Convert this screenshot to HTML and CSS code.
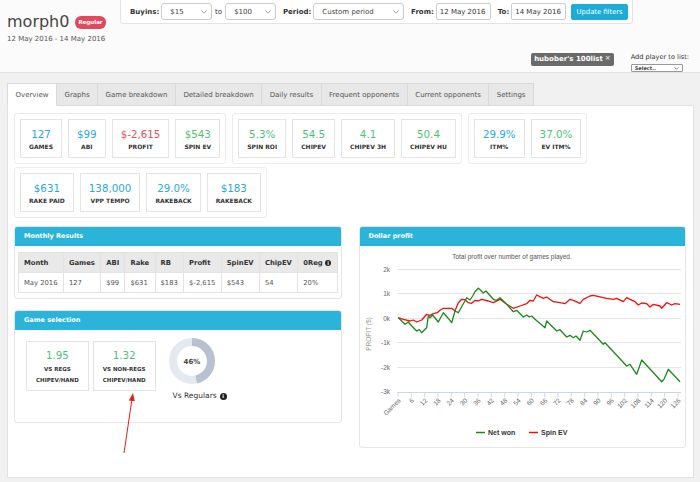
FILE: index.html
```html
<!DOCTYPE html>
<html lang="en">
<head>
  <meta charset="UTF-8">
  <meta name="viewport" content="width=device-width, initial-scale=1.0">
  <title>morph0 - Overview</title>
  <link rel="stylesheet" href="styles.css">
</head>
<body>
  <header class="top">
    <div class="player">
      <h1>morph0 <span class="badge">Regular</span></h1>
      <p class="range">12 May 2016 - 14 May 2016</p>
    </div>
    <div class="right">
      <div class="filters">
        <label class="first">Buyins:</label>
        <div class="select select-sm"><span>$15</span><svg width="6" height="4" viewBox="0 0 6 4"><polyline points="0.5,0.5 3,3 5.5,0.5" fill="none" stroke="#888" stroke-width="0.8"/></svg></div>
        <span class="to">to</span>
        <div class="select select-sm"><span>$100</span><svg width="6" height="4" viewBox="0 0 6 4"><polyline points="0.5,0.5 3,3 5.5,0.5" fill="none" stroke="#888" stroke-width="0.8"/></svg></div>
        <label>Period:</label>
        <div class="select select-lg"><span>Custom period</span><svg width="6" height="4" viewBox="0 0 6 4"><polyline points="0.5,0.5 3,3 5.5,0.5" fill="none" stroke="#888" stroke-width="0.8"/></svg></div>
        <label>From:</label>
        <input class="date" type="text" value="12 May 2016">
        <label>To:</label>
        <input class="date" type="text" value="14 May 2016">
        <button class="btn">Update filters</button>
      </div>
      <div class="lists">
        <span class="tag">hubober's 100list<span class="x">×</span></span>
        <div class="add-player">
          <label>Add player to list:</label>
          <div class="select select-xs"><span>Select..</span><svg width="5" height="3" viewBox="0 0 6 4"><polyline points="0.5,0.5 3,3 5.5,0.5" fill="none" stroke="#555" stroke-width="1"/></svg></div>
        </div>
      </div>
    </div>
  </header>

  <main class="main">
    <ul class="tabs">
      <li class="active">Overview</li>
      <li>Graphs</li>
      <li>Game breakdown</li>
      <li>Detailed breakdown</li>
      <li>Daily results</li>
      <li>Frequent opponents</li>
      <li>Current opponents</li>
      <li>Settings</li>
    </ul>

    <section class="tab-panel">
      <div class="stats">
        <div class="stat-group">
          <div class="stat"><div class="stat-value blue">127</div><div class="stat-label">GAMES</div></div>
          <div class="stat"><div class="stat-value blue">$99</div><div class="stat-label">ABI</div></div>
          <div class="stat"><div class="stat-value red">$-2,615</div><div class="stat-label">PROFIT</div></div>
          <div class="stat"><div class="stat-value green">$543</div><div class="stat-label">SPIN EV</div></div>
        </div>
        <div class="stat-group">
          <div class="stat"><div class="stat-value green">5.3%</div><div class="stat-label">SPIN ROI</div></div>
          <div class="stat"><div class="stat-value green">54.5</div><div class="stat-label">CHIPEV</div></div>
          <div class="stat"><div class="stat-value green">4.1</div><div class="stat-label">CHIPEV 3H</div></div>
          <div class="stat"><div class="stat-value green">50.4</div><div class="stat-label">CHIPEV HU</div></div>
        </div>
        <div class="stat-group">
          <div class="stat"><div class="stat-value blue">29.9%</div><div class="stat-label">ITM%</div></div>
          <div class="stat"><div class="stat-value green">37.0%</div><div class="stat-label">EV ITM%</div></div>
        </div>
        <div class="stat-group">
          <div class="stat"><div class="stat-value blue">$631</div><div class="stat-label">RAKE PAID</div></div>
          <div class="stat"><div class="stat-value blue">138,000</div><div class="stat-label">VPP TEMPO</div></div>
          <div class="stat"><div class="stat-value blue">29.0%</div><div class="stat-label">RAKEBACK</div></div>
          <div class="stat"><div class="stat-value blue">$183</div><div class="stat-label">RAKEBACK</div></div>
        </div>
      </div>

      <div class="columns">
        <div class="col">
          <div class="box">
            <div class="box-head">Monthly Results</div>
            <div class="box-body monthly">
              <table>
                <tr>
                  <th>Month</th><th>Games</th><th>ABI</th><th>Rake</th><th>RB</th><th>Profit</th><th>SpinEV</th><th>ChipEV</th><th>0Reg <span class="info">i</span></th>
                </tr>
                <tr>
                  <td>May 2016</td><td>127</td><td>$99</td><td>$631</td><td>$183</td><td>$-2,615</td><td>$543</td><td>54</td><td>20%</td>
                </tr>
              </table>
            </div>
          </div>

          <div class="box">
            <div class="box-head">Game selection</div>
            <div class="box-body selection">
              <div class="sel-card">
                <div class="stat-value green">1.95</div>
                <div class="sel-label first">VS REGS</div>
                <div class="sel-label">CHIPEV/HAND</div>
              </div>
              <div class="sel-card">
                <div class="stat-value green">1.32</div>
                <div class="sel-label first">VS NON-REGS</div>
                <div class="sel-label">CHIPEV/HAND</div>
              </div>
              <div class="donut-wrap">
                <svg class="donut" width="46" height="46" viewBox="0 0 46 46">
                  <circle cx="23" cy="23" r="19" fill="none" stroke="#e4e8ef" stroke-width="8"/>
                  <circle cx="23" cy="23" r="19" fill="none" stroke="#b7c1d1" stroke-width="8" stroke-dasharray="54.9 119.4" transform="rotate(-90 23 23)"/>
                  <text x="23" y="25.5" text-anchor="middle">46%</text>
                </svg>
                <div class="vs-reg">Vs Regulars <span class="info big">i</span></div>
              </div>
            </div>
          </div>
        </div>

        <div class="col">
          <div class="box">
            <div class="box-head">Dollar profit</div>
            <svg class="chart" width="325" height="201" viewBox="360 245 325 201">
              <text class="title" x="512" y="258" text-anchor="middle">Total profit over number of games played.</text>
              <g class="grid">
                <line x1="397" y1="268.5" x2="681" y2="268.5"/>
                <line x1="397" y1="292.5" x2="681" y2="292.5"/>
                <line x1="397" y1="317.5" x2="681" y2="317.5"/>
                <line x1="397" y1="341.5" x2="681" y2="341.5"/>
                <line x1="397" y1="366.5" x2="681" y2="366.5"/>
              </g>
              <g class="ylab" text-anchor="end">
                <text x="390" y="270.5">2k</text>
                <text x="390" y="295">1k</text>
                <text x="390" y="319.5">0k</text>
                <text x="390" y="344">-1k</text>
                <text x="390" y="368.5">-2k</text>
                <text x="390" y="393">-3k</text>
              </g>
              <text class="ytitle" transform="translate(371 333) rotate(-90)" text-anchor="middle">PROFIT ($)</text>
              <g class="axis">
                <line x1="397" y1="391.5" x2="681" y2="391.5"/>
                <line x1="398" y1="391" x2="398" y2="396"/>
                <line x1="411.3" y1="391" x2="411.3" y2="396"/>
                <line x1="424.7" y1="391" x2="424.7" y2="396"/>
                <line x1="438" y1="391" x2="438" y2="396"/>
                <line x1="451.3" y1="391" x2="451.3" y2="396"/>
                <line x1="464.7" y1="391" x2="464.7" y2="396"/>
                <line x1="478" y1="391" x2="478" y2="396"/>
                <line x1="491.3" y1="391" x2="491.3" y2="396"/>
                <line x1="504.7" y1="391" x2="504.7" y2="396"/>
                <line x1="518" y1="391" x2="518" y2="396"/>
                <line x1="531.3" y1="391" x2="531.3" y2="396"/>
                <line x1="544.7" y1="391" x2="544.7" y2="396"/>
                <line x1="558" y1="391" x2="558" y2="396"/>
                <line x1="571.3" y1="391" x2="571.3" y2="396"/>
                <line x1="584.7" y1="391" x2="584.7" y2="396"/>
                <line x1="598" y1="391" x2="598" y2="396"/>
                <line x1="611.3" y1="391" x2="611.3" y2="396"/>
                <line x1="624.7" y1="391" x2="624.7" y2="396"/>
                <line x1="638" y1="391" x2="638" y2="396"/>
                <line x1="651.3" y1="391" x2="651.3" y2="396"/>
                <line x1="664.7" y1="391" x2="664.7" y2="396"/>
                <line x1="678" y1="391" x2="678" y2="396"/>
              </g>
              <g class="xlab" text-anchor="end">
                <text x="401" y="400" transform="rotate(-45 401 400)">Games</text>
                <text x="414.3" y="400" transform="rotate(-45 414.3 400)">6</text>
                <text x="427.7" y="400" transform="rotate(-45 427.7 400)">12</text>
                <text x="441" y="400" transform="rotate(-45 441 400)">18</text>
                <text x="454.3" y="400" transform="rotate(-45 454.3 400)">24</text>
                <text x="467.7" y="400" transform="rotate(-45 467.7 400)">30</text>
                <text x="481" y="400" transform="rotate(-45 481 400)">36</text>
                <text x="494.3" y="400" transform="rotate(-45 494.3 400)">42</text>
                <text x="507.7" y="400" transform="rotate(-45 507.7 400)">48</text>
                <text x="521" y="400" transform="rotate(-45 521 400)">54</text>
                <text x="534.3" y="400" transform="rotate(-45 534.3 400)">60</text>
                <text x="547.7" y="400" transform="rotate(-45 547.7 400)">66</text>
                <text x="561" y="400" transform="rotate(-45 561 400)">72</text>
                <text x="574.3" y="400" transform="rotate(-45 574.3 400)">78</text>
                <text x="587.7" y="400" transform="rotate(-45 587.7 400)">84</text>
                <text x="601" y="400" transform="rotate(-45 601 400)">90</text>
                <text x="614.3" y="400" transform="rotate(-45 614.3 400)">96</text>
                <text x="627.7" y="400" transform="rotate(-45 627.7 400)">102</text>
                <text x="641" y="400" transform="rotate(-45 641 400)">108</text>
                <text x="654.3" y="400" transform="rotate(-45 654.3 400)">114</text>
                <text x="667.7" y="400" transform="rotate(-45 667.7 400)">120</text>
                <text x="681" y="400" transform="rotate(-45 681 400)">126</text>
              </g>
              <polyline class="line-ev" points="398.3,316.7 403.3,318.3 410,320 413.3,319 416.7,321 421.7,319 426.7,313.3 430,314.3 433.3,312.7 437.3,311.7 440,309.3 443.3,307.3 451.7,307.3 455,310 458.3,301.7 461.7,298.3 465,298.7 468.3,301.7 471.7,302.3 475,299.3 478.3,300 481.7,298.3 488.3,300 493.3,301.7 500,298.3 506.7,303.3 513.3,307.3 520,305 526.7,302.7 530,299.3 533.3,300 536.7,294 543.3,297.3 546.7,296 553.3,300.7 560,301.7 565,302.7 570,298.3 573.3,299.3 580,302.3 583.3,298.3 590,295 593.3,294.3 606.7,297.3 613.3,298.3 616.7,297.3 623.3,300.7 626.7,296.7 630,298.3 635,300.7 638.3,304 641.7,302 646.7,302.7 650,306 653.3,303.3 660,305 661.7,307.3 666.7,301.7 671.7,304 675,302.7 680,303.3"/>
              <polyline class="line-net" points="398.3,316.7 401.7,320 405,323.3 408.3,321 411.7,325 416.7,330 419.3,328.7 421.7,331.7 425,328.3 426.7,326.7 428.3,315 430,316.7 432.7,314 438.3,321 443.3,311.7 447.7,316.7 451.7,321.7 455,310 458.3,311.7 466.7,296.7 470,299 472.7,295 475,290.7 478.3,287.3 480.7,289.3 483.3,292 486,290 493.3,298.3 496.7,299.3 500,296.7 506.7,303.3 513.3,310.7 516.7,309.3 523.3,316 526.7,314 529.3,316 531.7,315 535,318.3 545,326.7 546.7,320 556.7,330 560,328.7 566.7,336 570,334.3 573.3,336.7 576,335 580,339.3 583.3,330 586.7,331 590,329.3 603.3,343.3 605,341.7 626.7,365 630,363.3 636.7,373.3 641.7,359 661.7,380.7 664,378.3 668.3,368.3 680,380.7"/>
              <g class="legend">
                <line x1="476" y1="431.5" x2="485" y2="431.5" stroke="#1a8a1a"/>
                <text x="488" y="434">Net won</text>
                <line x1="529" y1="431.5" x2="538" y2="431.5" stroke="#f01010"/>
                <text x="541" y="434">Spin EV</text>
              </g>
            </svg>
          </div>
        </div>
      </div>
    </section>
  </main>

  <!-- annotation arrow -->
  <svg class="arrow" width="24" height="70" viewBox="0 0 24 70">
    <line x1="7" y1="65" x2="15" y2="11" stroke="#e0201a" stroke-width="1"/>
    <polygon points="16,5 17.8,13.3 11.8,12.5" fill="#e0201a"/>
  </svg>
</body>
</html>
```

FILE: styles.css
```css
* {
  box-sizing: border-box;
}

html, body {
  overflow: hidden;
}

body {
  margin: 0;
  position: relative;
  background-color: #f1f1f1;
  font-family: "DejaVu Sans", Verdana, sans-serif;
  color: #333;
}

/* header */
.top {
  display: flex;
  height: 73px;
  padding: 0 11px 0 7px;
  background-color: #fbfbfb;
  border-bottom: 1px solid #e2e2e2;
}

.player {
  width: 113px;
  padding-top: 12px;
}

h1 {
  margin: 0;
  display: flex;
  align-items: center;
  gap: 6px;
  font-size: 16px;
  font-weight: normal;
  line-height: 20px;
  color: #444;
}

.badge {
  height: 13px;
  padding: 0 3px;
  line-height: 13px;
  border-radius: 6px;
  background-color: #e04a5c;
  color: white;
  font-size: 5.5px;
  font-weight: bold;
}

.range {
  margin: 2px 0 0;
  font-size: 7px;
  line-height: 10px;
  color: #555;
}

.right {
  flex: 1;
  display: flex;
  flex-direction: column;
}

.filters {
  width: 513px;
  height: 25px;
  margin-top: -1px;
  padding: 0 4px 0 9px;
  display: flex;
  align-items: center;
  gap: 2px;
  background-color: white;
  border: 1px solid #e3e3e3;
  border-radius: 0 0 3px 3px;
  font-size: 7px;
}

.filters label {
  margin-left: 5px;
  font-weight: bold;
}

.filters label.first {
  margin-left: 0;
}

.to {
  margin: 0 1px;
}

.select {
  height: 17px;
  padding: 0 4px 0 8px;
  display: flex;
  align-items: center;
  justify-content: space-between;
  background-color: white;
  border: 1px solid #ccc;
  border-radius: 3px;
  color: #444;
}

.select-sm {
  width: 51px;
}

.select-lg {
  width: 91px;
}

.select-xs {
  width: 52px;
  height: 8px;
  margin-top: 2px;
  padding: 0 3px;
  border-color: #999;
  border-radius: 1px;
  font-size: 5px;
  font-weight: bold;
}

.date {
  width: 55px;
  height: 17px;
  padding: 0 3px;
  border: 1px solid #ccc;
  border-radius: 2px;
  font-family: inherit;
  font-size: 7px;
  color: #333;
}

.btn {
  width: 57px;
  height: 16px;
  margin-left: 3px;
  padding: 0;
  border: none;
  border-radius: 2px;
  background-color: #1badd8;
  color: white;
  font-family: inherit;
  font-size: 6.8px;
}

.lists {
  margin-top: auto;
  display: flex;
  justify-content: flex-end;
  align-items: flex-end;
  gap: 17px;
}

.tag {
  height: 13px;
  margin-bottom: 6px;
  padding: 0 3px;
  line-height: 13px;
  border-radius: 2px;
  background-color: #6a6a6a;
  color: white;
  font-size: 7px;
  font-weight: bold;
}

.tag .x {
  margin-left: 2px;
  font-weight: normal;
  font-size: 7px;
  vertical-align: top;
  line-height: 10px;
}

.add-player {
  display: flex;
  flex-direction: column;
}

.add-player label {
  font-size: 6.6px;
  line-height: 9px;
}

/* tabs */
.main {
  padding: 10px 6px 0 7px;
}

.tabs {
  display: flex;
  margin: 0 0 -1px;
  padding: 0;
  list-style: none;
}

.tabs li {
  position: relative;
  height: 23px;
  padding: 0 7.5px;
  line-height: 22px;
  font-size: 7px;
  color: #555;
  background-color: #e8e8e8;
  border: 1px solid #d9d9d9;
  border-left: none;
}

.tabs li:first-child {
  border-left: 1px solid #d9d9d9;
}

.tabs li.active {
  background-color: white;
  border-bottom-color: white;
}

.tab-panel {
  height: 373px;
  padding: 7px 7px 0 6px;
  background-color: white;
  border: 1px solid #e1e1e1;
}

/* stat cards */
.stats {
  display: flex;
  flex-wrap: wrap;
  gap: 3px 6px;
  margin-bottom: 8px;
}

.stat-group {
  display: flex;
  gap: 6px;
  padding: 5px;
  border: 1px solid #ececec;
  border-radius: 3px;
}

.stat {
  height: 39px;
  padding: 7px 8px 0;
  border: 1px solid #e4e4e4;
  text-align: center;
}

.stat-value {
  font-size: 10.3px;
  line-height: 14px;
}

.stat-label {
  margin-top: 2px;
  font-size: 6px;
  font-weight: bold;
  line-height: 8px;
  color: #333;
}

.blue { color: #2aa9dd; }
.red { color: #e5505f; }
.green { color: #4fbf78; }

/* boxes */
.columns {
  display: grid;
  grid-template-columns: 1fr 1fr;
  gap: 17px;
  align-items: start;
}

.col {
  display: flex;
  flex-direction: column;
  gap: 11px;
}

.box {
  background-color: white;
  border: 1px solid #e6e6e6;
  border-radius: 3px;
  overflow: hidden;
}

.box-head {
  height: 19px;
  padding: 0 9px;
  line-height: 19px;
  background-color: #2bb4d9;
  color: white;
  font-size: 6.5px;
  font-weight: bold;
}

.monthly {
  padding: 6px 3px 5px;
}

table {
  width: 100%;
  border-collapse: collapse;
  font-size: 6.8px;
}

th, td {
  height: 20px;
  padding: 0 5px;
  border: 1px solid #e3e3e3;
  text-align: left;
  white-space: nowrap;
}

th {
  background-color: #e9e9e9;
  color: #333;
}

td {
  color: #555;
}

.info {
  display: inline-block;
  width: 6px;
  height: 6px;
  border-radius: 50%;
  background-color: #222;
  color: white;
  font-size: 5px;
  font-weight: bold;
  line-height: 6px;
  text-align: center;
  vertical-align: middle;
}

.info.big {
  width: 7px;
  height: 7px;
  line-height: 7px;
}

.selection {
  height: 92px;
  padding: 11px 11px 0;
  display: flex;
  align-items: flex-start;
  gap: 4px;
}

.sel-card {
  height: 50px;
  padding: 7px 9px 0;
  border: 1px solid #e4e4e4;
  text-align: center;
}

.sel-card .stat-value {
  line-height: 12px;
}

.sel-label {
  font-size: 5.5px;
  font-weight: bold;
  line-height: 11px;
}

.sel-label.first {
  margin-top: 3px;
}

.donut-wrap {
  margin: -3px 0 0 9px;
  display: flex;
  flex-direction: column;
}

.donut text {
  font-size: 7px;
  font-weight: bold;
  fill: #444;
}

.vs-reg {
  margin-top: 7px;
  padding-left: 4px;
  display: flex;
  align-items: center;
  gap: 3px;
  font-size: 7.5px;
  line-height: 10px;
  color: #333;
}

/* chart */
.chart {
  display: block;
}

.chart text {
  font-family: "Liberation Sans", Arial, sans-serif;
  font-size: 6.5px;
  fill: #666;
}

.chart .title {
  fill: #555;
}

.chart .ytitle {
  fill: #999;
}

.grid line {
  stroke: #e6e6e6;
  stroke-width: 1;
}

.axis line {
  stroke: #ccd6eb;
  stroke-width: 1;
}

.line-net, .line-ev {
  fill: none;
  stroke-width: 1.3;
  stroke-linejoin: round;
}

.line-net { stroke: #1a8a1a; }
.line-ev { stroke: #f01010; }

.legend line {
  stroke-width: 1.6;
}

.chart .legend text {
  font-size: 7px;
  font-weight: bold;
  fill: #333;
}

.arrow {
  position: absolute;
  left: 117px;
  top: 388px;
}
```
